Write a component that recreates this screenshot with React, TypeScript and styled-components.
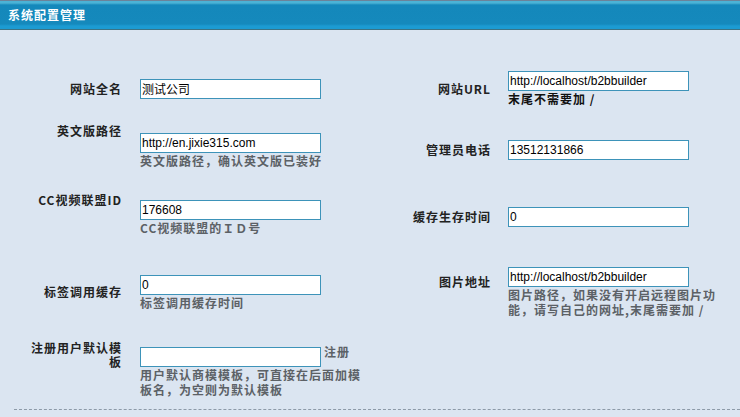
import React from 'react';
import styled, { createGlobalStyle } from 'styled-components';

const GlobalStyle = createGlobalStyle`
  html, body {
    margin: 0;
    padding: 0;
    background: #dbe5f1;
  }
  body {
    font-family: "Noto Sans CJK SC", "Liberation Sans", sans-serif;
    font-size: 12px;
  }
`;

const Panel = styled.div`
  width: 740px;
`;

const PanelHeader = styled.div`
  height: 28px;
  border-top: 1px solid #6b8299;
  border-bottom: 1px solid #3b7384;
  background: linear-gradient(#4bb3d6 0, #4bb3d6 2px, #1488bb 4px, #1589bc 23px, #1c9bd2 25px, #1c9bd2 100%);
  color: #fff;
  font-weight: bold;
  letter-spacing: 1px;
  line-height: 28px;
  padding-left: 8px;
`;

const Form = styled.div`
  padding-top: 28px;
`;

const Row = styled.div<{ $h: number }>`
  display: grid;
  grid-template-columns: 140px 230px 138px 1fr;
  align-items: center;
  height: ${p => p.$h}px;
`;

const Label = styled.div<{ $lift?: number; $side?: 'left' | 'right' }>`
  text-align: right;
  padding: 0 ${p => (p.$side === 'right' ? 17 : 18)}px 0 24px;
  font-weight: bold;
  color: #222;
  letter-spacing: 1px;
  line-height: 14px;
  margin-bottom: ${p => (p.$lift ?? 0) * 2}px;
`;

const Field = styled.div`
  line-height: 15px;
`;

const TextInput = styled.input<{ $inline?: boolean }>`
  display: ${p => (p.$inline ? 'inline-block' : 'block')};
  vertical-align: -4px;
  box-sizing: border-box;
  width: 181px;
  height: 20px;
  margin: 0 ${p => (p.$inline ? 3 : 0)}px 0 0;
  padding: 0 1px;
  border: 1px solid #3d93b9;
  background: #fff;
  font: 12px "Liberation Sans", "Noto Sans CJK SC", sans-serif;
  color: #000;
  outline: none;
`;

const Hint = styled.div<{ $tone?: 'dark' }>`
  font-weight: bold;
  letter-spacing: 1px;
  color: ${p => (p.$tone === 'dark' ? '#111' : '#5c6166')};
`;

const Divider = styled.div`
  margin-left: 14px;
  border-top: 1px dashed #8d9aa8;
`;

export default function App() {
  return (
    <Panel>
      <GlobalStyle />
      <PanelHeader>系统配置管理</PanelHeader>
      <Form>
        <Row $h={61}>
          <Label>网站全名</Label>
          <Field>
            <TextInput defaultValue="测试公司" />
          </Field>
          <Label $side="right">网站URL</Label>
          <Field>
            <TextInput defaultValue="http://localhost/b2bbuilder" />
            <Hint $tone="dark">末尾不需要加 /</Hint>
          </Field>
        </Row>
        <Row $h={62}>
          <Label $lift={19}>英文版路径</Label>
          <Field>
            <TextInput defaultValue="http://en.jixie315.com" />
            <Hint>英文版路径，确认英文版已装好</Hint>
          </Field>
          <Label $side="right">管理员电话</Label>
          <Field>
            <TextInput defaultValue="13512131866" />
          </Field>
        </Row>
        <Row $h={72}>
          <Label $lift={17}>CC视频联盟ID</Label>
          <Field>
            <TextInput defaultValue="176608" />
            <Hint>CC视频联盟的ＩＤ号</Hint>
          </Field>
          <Label $side="right">缓存生存时间</Label>
          <Field>
            <TextInput defaultValue="0" />
          </Field>
        </Row>
        <Row $h={78}>
          <Label>标签调用缓存</Label>
          <Field>
            <TextInput defaultValue="0" />
            <Hint>标签调用缓存时间</Hint>
          </Field>
          <Label $side="right" $lift={10}>图片地址</Label>
          <Field>
            <TextInput defaultValue="http://localhost/b2bbuilder" />
            <Hint>
              图片路径，如果没有开启远程图片功
              <br />
              能，请写自己的网址,末尾需要加 /
            </Hint>
          </Field>
        </Row>
        <Row $h={78}>
          <Label $lift={15}>
            注册用户默认模
            <br />
            板
          </Label>
          <Field>
            <Hint>
              <TextInput $inline defaultValue="" />注册
              <br />
              用户默认商模模板，可直接在后面加模
              <br />
              板名，为空则为默认模板
            </Hint>
          </Field>
          <div />
          <div />
        </Row>
      </Form>
      <Divider />
    </Panel>
  );
}
